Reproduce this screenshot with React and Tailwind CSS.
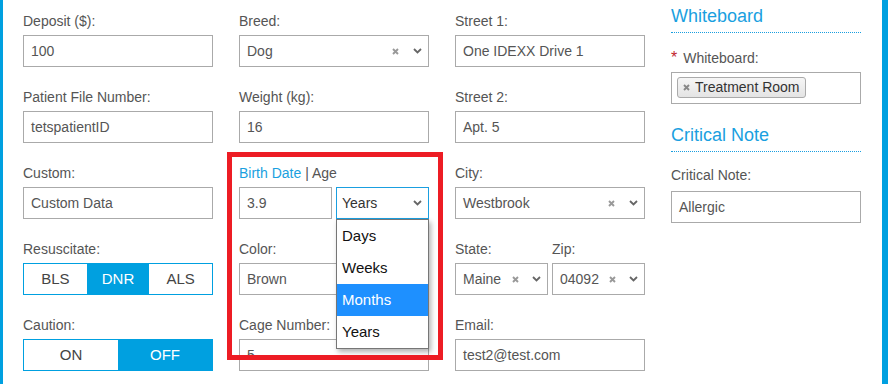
import React from "react";

function Chevron() {
  return (
    <svg width="9" height="6" viewBox="0 0 9 6" className="shrink-0">
      <path d="M1 1 L4.5 4.5 L8 1" fill="none" stroke="#666" strokeWidth="1.8" />
    </svg>
  );
}

function XMark({ color = "#999" }) {
  return (
    <svg width="7" height="7" viewBox="0 0 7 7" className="shrink-0">
      <path d="M1 1 L6 6 M6 1 L1 6" fill="none" stroke={color} strokeWidth="1.9" />
    </svg>
  );
}

function Label({ children }) {
  return <div className="h-[20px] leading-[20px] text-[14px] text-[#555] mb-[4px] whitespace-nowrap">{children}</div>;
}

function Box({ children }) {
  return (
    <div className="h-[32px] border border-[#aaa] bg-white px-[7px] flex items-center text-[14px] text-[#555] whitespace-nowrap overflow-hidden">
      {children}
    </div>
  );
}

function Select({ value, gap = "gap-[14px]" }) {
  return (
    <div className="h-[32px] border border-[#aaa] bg-white pl-[7px] pr-[6px] flex items-center text-[14px] text-[#555] whitespace-nowrap">
      <span className="flex-1">{value}</span>
      <div className={"flex items-center " + gap}>
        <XMark />
        <Chevron />
      </div>
    </div>
  );
}

function Field({ label, children }) {
  return (
    <div className="mb-[20px]">
      <Label>{label}</Label>
      {children}
    </div>
  );
}

function Segmented({ items, active }) {
  return (
    <div className="h-[32px] border border-[#00a0e0] flex text-[15px]">
      {items.map((it, i) => (
        <div
          key={it}
          className={
            "flex-1 flex items-center justify-center " +
            (i === active ? "bg-[#00a0e0] text-white" : "bg-white text-[#444]")
          }
        >
          {it}
        </div>
      ))}
    </div>
  );
}

export default function App() {
  return (
    <div className="relative w-[888px] h-[384px] bg-white overflow-hidden flex font-['Liberation_Sans',Arial,sans-serif]">
      <div className="w-[3px] h-full bg-[#00a0e0]" />
      <div className="flex gap-[26px] pl-[20px]">
        {/* Column 1 */}
        <div className="w-[190px] pt-[11px]">
          <Field label="Deposit ($):"><Box>100</Box></Field>
          <Field label="Patient File Number:"><Box>tetspatientID</Box></Field>
          <Field label="Custom:"><Box>Custom Data</Box></Field>
          <Field label="Resuscitate:">
            <Segmented items={["BLS", "DNR", "ALS"]} active={1} />
          </Field>
          <Field label="Caution:">
            <Segmented items={["ON", "OFF"]} active={1} />
          </Field>
        </div>

        {/* Column 2 */}
        <div className="w-[190px] pt-[11px]">
          <Field label="Breed:"><Select value="Dog" /></Field>
          <Field label="Weight (kg):"><Box>16</Box></Field>
          <div className="mb-[20px]">
            <Label>
              <span className="text-[#1a9fe0]">Birth Date</span> | Age
            </Label>
            <div className="flex gap-[4px]">
              <div className="w-[93px]"><Box>3.9</Box></div>
              <div className="relative w-[93px]">
                <div className="h-[32px] border border-[#1a9fe0] bg-white pl-[5px] pr-[6px] flex items-center text-[14px] text-[#333]">
                  <span className="flex-1">Years</span>
                  <Chevron />
                </div>
                <div className="absolute left-0 top-[32px] w-[93px] z-10 border border-[#767676] bg-white shadow-[2px_3px_5px_rgba(0,0,0,0.3)] text-[15px] text-[#111]">
                  <div className="h-[32px] pl-[5px] flex items-center">Days</div>
                  <div className="h-[32px] pl-[5px] flex items-center">Weeks</div>
                  <div className="h-[32px] pl-[5px] flex items-center bg-[#1e90ff] text-white">Months</div>
                  <div className="h-[32px] pl-[5px] flex items-center">Years</div>
                </div>
              </div>
            </div>
          </div>
          <Field label="Color:"><Box>Brown</Box></Field>
          <Field label="Cage Number:"><Box>5</Box></Field>
        </div>

        {/* Column 3 */}
        <div className="w-[190px] pt-[11px]">
          <Field label="Street 1:"><Box>One IDEXX Drive 1</Box></Field>
          <Field label="Street 2:"><Box>Apt. 5</Box></Field>
          <Field label="City:"><Select value="Westbrook" /></Field>
          <div className="mb-[20px] flex gap-[4px]">
            <div className="w-[93px]">
              <Label>State:</Label>
              <Select value="Maine" gap="gap-[13px]" />
            </div>
            <div className="w-[93px]">
              <Label>Zip:</Label>
              <Select value="04092" gap="gap-[13px]" />
            </div>
          </div>
          <Field label="Email:"><Box>test2@test.com</Box></Field>
        </div>

        {/* Column 4 */}
        <div className="w-[190px] pt-[2px]">
          <div className="h-[31px] pt-[2px] text-[18px] leading-[24px] text-[#1a9fe0] border-b border-dotted border-[#1a9fe0]">Whiteboard</div>
          <div className="mt-[15px] h-[20px] leading-[20px] text-[14px] text-[#555] mb-[4px] flex items-center">
            <span className="text-[#c1272d] text-[16px] mr-[6px]">*</span>
            Whiteboard:
          </div>
          <div className="h-[32px] border border-[#aaa] bg-white px-[5px] pt-[4px] flex items-start">
            <div className="flex items-center h-[21px] px-[5px] gap-[5px] border border-[#aaa] rounded-[3px] bg-linear-to-b from-[#f6f6f6] to-[#e4e4e4] text-[14px] leading-[19px] text-[#333]">
              <XMark color="#888" />
              Treatment Room
            </div>
          </div>
          <div className="mt-[17px] h-[31px] pt-[2px] text-[18px] leading-[24px] text-[#1a9fe0] border-b border-dotted border-[#1a9fe0]">Critical Note</div>
          <div className="mt-[13px] h-[20px] leading-[20px] text-[14px] text-[#555] mb-[6px]">Critical Note:</div>
          <Box>Allergic</Box>
        </div>
      </div>
      <div className="absolute right-0 top-0 w-[6px] h-full bg-[#00a0e0]" />
      <div className="absolute left-[227px] top-[152px] w-[216px] h-[208px] border-[5px] border-[#ed1c24] z-20 pointer-events-none" />
    </div>
  );
}
